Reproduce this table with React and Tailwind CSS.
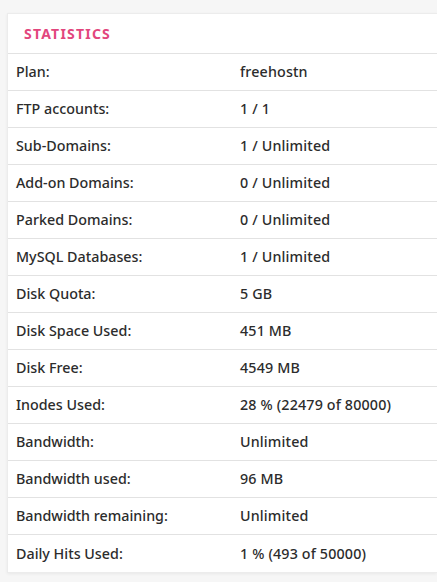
const rows = [
  ["Plan:", "freehostn"],
  ["FTP accounts:", "1 / 1"],
  ["Sub-Domains:", "1 / Unlimited"],
  ["Add-on Domains:", "0 / Unlimited"],
  ["Parked Domains:", "0 / Unlimited"],
  ["MySQL Databases:", "1 / Unlimited"],
  ["Disk Quota:", "5 GB"],
  ["Disk Space Used:", "451 MB"],
  ["Disk Free:", "4549 MB"],
  ["Inodes Used:", "28 % (22479 of 80000)"],
  ["Bandwidth:", "Unlimited"],
  ["Bandwidth used:", "96 MB"],
  ["Bandwidth remaining:", "Unlimited"],
  ["Daily Hits Used:", "1 % (493 of 50000)"],
];

const App = () => {
  return (
    <div
      className="min-h-[582px] bg-[#f6f6f6] pt-[13px] overflow-hidden"
      style={{ fontFamily: '"Noto Sans", "Open Sans", sans-serif' }}
    >
      <div className="ml-[7px] bg-white border-l border-t border-b border-[#ececec] shadow-[0_1px_3px_rgba(0,0,0,0.06)]">
        <div className="h-[40px] flex items-center pl-[16px] border-b border-[#e2e2e2]">
          <h2 className="text-[14px] font-bold tracking-[1.2px] text-[#e2467d]">STATISTICS</h2>
        </div>
        {rows.map((row, i) => (
          <div
            key={i}
            className={`h-[37px] flex items-center text-[14.3px] font-medium text-[#2c2c2c] ${
              i < rows.length - 1 ? "border-b border-[#e2e2e2]" : ""
            }`}
          >
            <span className="w-[232px] pl-[8px]">{row[0]}</span>
            <span className="tracking-[0.15px]">{row[1]}</span>
          </div>
        ))}
      </div>
    </div>
  );
};

export default App;
